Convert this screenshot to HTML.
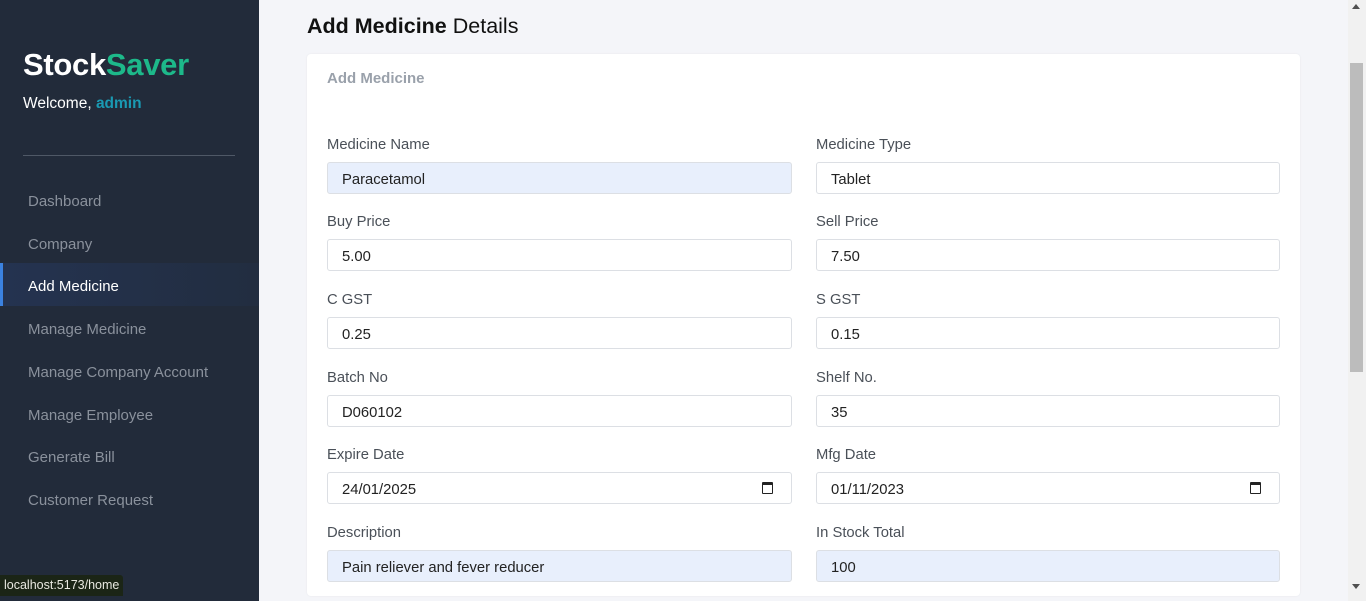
<!DOCTYPE html>
<html><head><meta charset="utf-8"><style>
*{margin:0;padding:0;box-sizing:border-box}
body{width:1366px;height:601px;overflow:hidden;background:#f4f5f9;font-family:"Liberation Sans",sans-serif;position:relative}
.sb{position:absolute;left:0;top:0;width:259px;height:601px;background:#222b3a}
.logo{position:absolute;left:23px;top:47px;font-size:31px;font-weight:bold;color:#fff;letter-spacing:-0.3px}
.logo span{color:#1db98a}
.wel{position:absolute;left:23px;top:95px;font-size:15.5px;color:#fff}
.wel b{color:#1a9ab3}
.hr{position:absolute;left:23px;top:155px;width:212px;height:1px;background:#4f5866}
.nav{position:absolute;left:28px;font-size:15px;color:#8a919c}
.act{position:absolute;left:0;top:263px;width:259px;height:43px;background:linear-gradient(90deg,#243350,#222d40);border-left:3px solid #3b82e0}
.status{position:absolute;left:0;top:575px;background:#1b2516;color:#e8e8e0;font-size:12.5px;padding:3px 4px;border-radius:0 3px 0 0;height:21px}
.h{position:absolute;left:307px;top:14px;font-size:21.5px;color:#111}
.card{position:absolute;left:307px;top:54px;width:993px;height:542px;background:#fff;border-radius:4px;box-shadow:0 0 2px rgba(0,0,0,.06)}
.ct{position:absolute;left:327px;top:70px;font-size:15px;font-weight:bold;color:#9aa1ab}
.lb{position:absolute;font-size:14.8px;color:#4a5058}
.in{position:absolute;width:465px;height:32px;border:1px solid #dcdfe4;border-radius:3px;background:#fff;font-size:14.8px;color:#222;padding:9px 0 0 14px}
.in.b{background:#e8effc}
.in.r{width:464px}
.cal{position:absolute;right:18px;top:9px;width:11px;height:12px;border:1.5px solid #222;border-top-width:3px;border-radius:1px}
.sc{position:absolute;left:1348px;top:0;width:18px;height:601px;background:#f1f1f1}
.th{position:absolute;left:1350px;top:63px;width:13px;height:309px;background:#bcbcbc}
</style></head><body>
<div class="sb">
<div class="logo">Stock<span>Saver</span></div>
<div class="wel">Welcome, <b>admin</b></div>
<div class="hr"></div>
<div class="act"></div>
<div class="nav" style="top:193px">Dashboard</div>
<div class="nav" style="top:236px">Company</div>
<div class="nav" style="top:278px;color:#fff">Add Medicine</div>
<div class="nav" style="top:321px">Manage Medicine</div>
<div class="nav" style="top:364px">Manage Company Account</div>
<div class="nav" style="top:407px">Manage Employee</div>
<div class="nav" style="top:449px">Generate Bill</div>
<div class="nav" style="top:492px">Customer Request</div>
</div>
<div class="status">localhost:5173/home</div>
<div class="h"><b>Add Medicine</b> Details</div>
<div class="card"></div>
<div class="ct">Add Medicine</div>

<div class="lb" style="left:327px;top:137px">Medicine Name</div>
<div class="in b" style="left:327px;top:162px">Paracetamol</div>
<div class="lb" style="left:816px;top:137px">Medicine Type</div>
<div class="in r" style="left:816px;top:162px">Tablet</div>

<div class="lb" style="left:327px;top:214px">Buy Price</div>
<div class="in" style="left:327px;top:239px">5.00</div>
<div class="lb" style="left:816px;top:214px">Sell Price</div>
<div class="in r" style="left:816px;top:239px">7.50</div>

<div class="lb" style="left:327px;top:292px">C GST</div>
<div class="in" style="left:327px;top:317px">0.25</div>
<div class="lb" style="left:816px;top:292px">S GST</div>
<div class="in r" style="left:816px;top:317px">0.15</div>

<div class="lb" style="left:327px;top:370px">Batch No</div>
<div class="in" style="left:327px;top:395px">D060102</div>
<div class="lb" style="left:816px;top:370px">Shelf No.</div>
<div class="in r" style="left:816px;top:395px">35</div>

<div class="lb" style="left:327px;top:447px">Expire Date</div>
<div class="in" style="left:327px;top:472px">24/01/2025<div class="cal"></div></div>
<div class="lb" style="left:816px;top:447px">Mfg Date</div>
<div class="in r" style="left:816px;top:472px">01/11/2023<div class="cal"></div></div>

<div class="lb" style="left:327px;top:525px">Description</div>
<div class="in b" style="left:327px;top:550px">Pain reliever and fever reducer</div>
<div class="lb" style="left:816px;top:525px">In Stock Total</div>
<div class="in b r" style="left:816px;top:550px">100</div>

<div class="sc"></div><div class="th"></div>
<div style="position:absolute;left:1352px;top:4px;width:0;height:0;border-left:4px solid transparent;border-right:4px solid transparent;border-bottom:5px solid #505050"></div>
<div style="position:absolute;left:1352px;top:584px;width:0;height:0;border-left:4px solid transparent;border-right:4px solid transparent;border-top:5px solid #505050"></div>
</body></html>
